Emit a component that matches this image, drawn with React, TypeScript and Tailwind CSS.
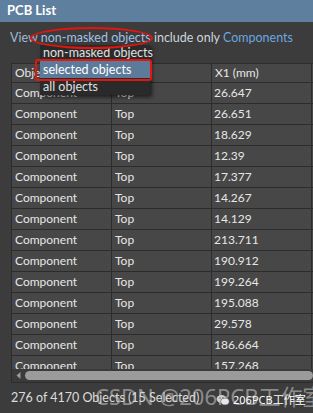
import React from 'react';

const values = [
  '26.647', '26.651', '18.629', '12.39', '17.377', '14.267', '14.129',
  '213.711', '190.912', '199.264', '195.088', '29.578', '186.664', '157.268',
];

const WeChatIcon: React.FC = () => (
  <svg width="14" height="12" viewBox="0 0 14 12">
    <ellipse cx="5.5" cy="5" rx="5" ry="4" fill="#cfcfcf" />
    <ellipse cx="9" cy="7.5" rx="4.2" ry="3.4" fill="#e8e8e8" stroke="#555" strokeWidth="0.6" />
    <circle cx="4" cy="4" r="0.7" fill="#555" />
    <circle cx="7" cy="4" r="0.7" fill="#555" />
  </svg>
);

const App: React.FC = () => {
  return (
    <div
      className="relative w-[313px] h-[413px] overflow-hidden bg-[#3c3c3c] flex flex-col text-[12.5px] text-[#e6e6e6]"
      style={{ fontFamily: 'Lato, "Noto Sans", sans-serif' }}
    >
      {/* title bar */}
      <div className="h-[22px] shrink-0 bg-[#5f7f9e] flex items-center px-[7px] text-white font-bold text-[13px]">
        PCB List
      </div>

      {/* filter line */}
      <div className="h-[41px] shrink-0 pl-[10px] pt-[8px] leading-[16px] whitespace-nowrap">
        <span className="text-[#9dbbd8]">View </span>
        <span className="text-[#9fc3e8]">non-masked objects</span>
        <span className="text-[#cdd5dd]"> include only </span>
        <span className="text-[#6aa6e0]">Components</span>
      </div>

      {/* table */}
      <div className="ml-[11px] h-[320px] shrink-0 border-l border-b border-t border-[#2c2c2c] flex flex-col overflow-hidden text-[12px]">
        <div className="grid grid-cols-[100px_100px_100px_100px] h-[19px] shrink-0 bg-[#474747] border-b border-[#2c2c2c]">
          <div className="pl-[3px] leading-[18px] border-r border-[#2c2c2c] whitespace-nowrap overflow-hidden">Object Kind</div>
          <div className="pl-[3px] leading-[18px] border-r border-[#2c2c2c]">Layer</div>
          <div className="pl-[3px] leading-[18px] border-r border-[#2c2c2c]">X1 (mm)</div>
          <div></div>
        </div>
        <div className="flex-1 overflow-hidden">
          {values.map((v, i) => (
            <div
              key={i}
              className="grid grid-cols-[100px_100px_100px_100px] h-[21px] bg-[#474747] border-b border-[#2c2c2c]"
            >
              <div className="pl-[3px] leading-[20px] border-r border-[#2c2c2c]">Component</div>
              <div className="pl-[3px] leading-[20px] border-r border-[#2c2c2c]">Top</div>
              <div className="pl-[2px] leading-[20px] border-r border-[#2c2c2c]">{v}</div>
              <div></div>
            </div>
          ))}
        </div>
        {/* horizontal scrollbar */}
        <div className="h-[13px] shrink-0 bg-[#3a3a3a] flex items-center pl-[4px] gap-[4px]">
          <svg width="5" height="7" viewBox="0 0 5 7">
            <path d="M4.5 0 L0.5 3.5 L4.5 7 Z" fill="#9a9a9a" />
          </svg>
          <div className="h-[9px] flex-1 rounded-full bg-[#9b9b9b]" />
        </div>
      </div>

      {/* status */}
      <div className="flex-1 pl-[11px] pt-[6px] text-[#dcdcdc] whitespace-nowrap">
        276 of 4170 Objects (15 Selected)
      </div>

      {/* dropdown menu */}
      <div className="absolute left-[40px] top-[45px] w-[110px] bg-[#2a2a2a] shadow-[2px_2px_4px_rgba(0,0,0,0.6)] text-[#e0e0e0] leading-[17px] whitespace-nowrap">
        <div className="h-[16px] pl-[3px] leading-[15px]">non-masked objects</div>
        <div className="h-[17px] pl-[3px] bg-[#5c7b9a] text-white">selected objects</div>
        <div className="h-[17px] pl-[3px]">all objects</div>
      </div>

      {/* annotations */}
      <div className="absolute left-[30px] top-[27px] w-[123px] h-[22px] rounded-[50%] border-[2.5px] border-[#e3150f]" />
      <div className="absolute left-[35px] top-[59px] w-[117px] h-[22px] rounded-[3px] border-[2.5px] border-[#e3150f]" />

      {/* watermark */}
      <div className="absolute left-[95px] top-[382px] text-[22px] leading-[28px] text-[rgba(210,210,210,0.55)] whitespace-nowrap"
        style={{ fontFamily: '"Noto Sans", "Noto Sans CJK SC", sans-serif' }}>
        CSDN @206PCB工作室
      </div>
      <div className="absolute left-[216px] top-[392px] flex items-center gap-[3px] text-[11px] text-white whitespace-nowrap"
        style={{ fontFamily: '"Noto Sans", "Noto Sans CJK SC", sans-serif' }}>
        <WeChatIcon />
        <span>206PCB工作室</span>
      </div>
    </div>
  );
};

export default App;
